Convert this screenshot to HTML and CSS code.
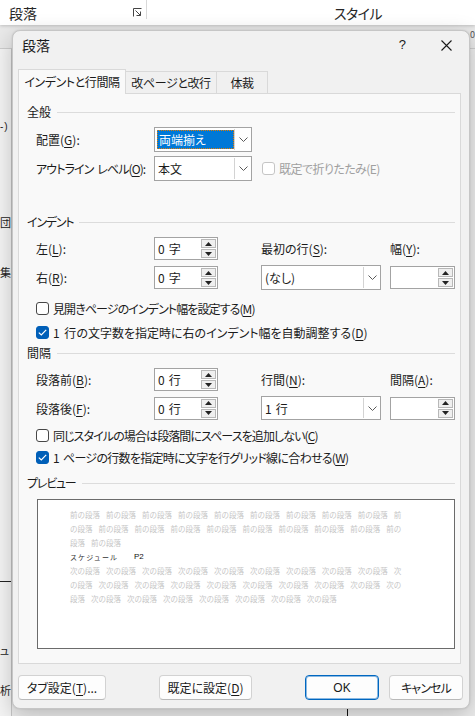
FILE: index.html
```html
<!DOCTYPE html>
<html lang="ja">
<head>
<meta charset="utf-8">
<title>段落</title>
<link rel="stylesheet" href="styles.css">
</head>
<body>
<div class="app">
  <div class="ribbon">
    <div class="rgroup">
      <span class="rlabel">段落</span>
      <svg class="launcher" width="9" height="9" viewBox="0 0 9 9"><path d="M0.5 8.5V0.5H8.5" fill="none" stroke="#444" stroke-width="1"/><path d="M2.5 2.5L7.5 7.5M7.5 3.5V7.5H3.5" fill="none" stroke="#444" stroke-width="1"/></svg>
    </div>
    <div class="rsep"></div>
    <div class="rgroup2">スタイル</div>
  </div>
  <div class="band"><span class="band-num">0</span></div>
  <div class="work">
    <div class="docstrip">
      <div class="d d1">-)</div>
      <div class="d d2">団</div>
      <div class="d d3">集</div>
      <div class="dline"></div>
      <div class="d d4">ュ</div>
      <div class="d d5">析</div>
    </div>
    <div class="docmain"><div class="vline"></div></div>
  </div>
</div>

<div class="dialog">
  <div class="titlebar">
    <span class="title">段落</span>
    <span class="help">?</span>
    <svg class="close" width="11" height="11" viewBox="0 0 11 11"><path d="M0.5 0.5L10.5 10.5M10.5 0.5L0.5 10.5" stroke="#1a1a1a" stroke-width="1.1" fill="none"/></svg>
  </div>
  <div class="tabs">
    <div class="tab active t1">インデントと行間隔</div>
    <div class="tab t2">改ページと改行</div>
    <div class="tab t3">体裁</div>
  </div>
  <div class="panel">
    <div class="sec">全般</div>
    <div class="grid-general">
      <div class="lbl">配置(<u>G</u>):</div>
      <div class="combo">
        <div class="cval"><span class="sel">両端揃え</span></div>
        <div class="cbtn"><svg width="9" height="5" viewBox="0 0 9 5"><path d="M0.5 0.5L4.5 4.5L8.5 0.5" fill="none" stroke="#5a5a5a"/></svg></div>
      </div>
      <div></div>
      <div class="lbl tight-9 spaced">アウトライン レベル(<u>O</u>):</div>
      <div class="combo">
        <div class="cval">本文</div>
        <div class="cbtn"><svg width="9" height="5" viewBox="0 0 9 5"><path d="M0.5 0.5L4.5 4.5L8.5 0.5" fill="none" stroke="#5a5a5a"/></svg></div>
      </div>
      <div class="check disabled inline"><span class="box"></span><span class="tight-6">既定で折りたたみ(E)</span></div>
    </div>

    <div class="sec sec-indent"><span class="tight-12">インデント</span></div>
    <div class="grid-six g1">
      <div class="lbl">左(<u>L</u>):</div>
      <div class="spin"><span class="sval">0 字</span><div class="sbtns"><div class="sb"><svg width="7" height="4" viewBox="0 0 7 4"><polygon points="0,4 3.5,0 7,4" fill="#222"/></svg></div><div class="sb"><svg width="7" height="4" viewBox="0 0 7 4"><polygon points="0,0 7,0 3.5,4" fill="#222"/></svg></div></div></div>
      <div></div>
      <div class="lbl">最初の行(<u>S</u>):</div>
      <div></div>
      <div class="lbl">幅(<u>Y</u>):</div>

      <div class="lbl">右(<u>R</u>):</div>
      <div class="spin"><span class="sval">0 字</span><div class="sbtns"><div class="sb"><svg width="7" height="4" viewBox="0 0 7 4"><polygon points="0,4 3.5,0 7,4" fill="#222"/></svg></div><div class="sb"><svg width="7" height="4" viewBox="0 0 7 4"><polygon points="0,0 7,0 3.5,4" fill="#222"/></svg></div></div></div>
      <div></div>
      <div class="combo">
        <div class="cval">(なし)</div>
        <div class="cbtn"><svg width="9" height="5" viewBox="0 0 9 5"><path d="M0.5 0.5L4.5 4.5L8.5 0.5" fill="none" stroke="#5a5a5a"/></svg></div>
      </div>
      <div></div>
      <div class="spin"><span class="sval"></span><div class="sbtns"><div class="sb"><svg width="7" height="4" viewBox="0 0 7 4"><polygon points="0,4 3.5,0 7,4" fill="#222"/></svg></div><div class="sb"><svg width="7" height="4" viewBox="0 0 7 4"><polygon points="0,0 7,0 3.5,4" fill="#222"/></svg></div></div></div>
    </div>
    <div class="checks c1">
      <div class="check"><span class="box"></span><span class="tight-9">見開きページのインデント幅を設定する(<u>M</u>)</span></div>
      <div class="check"><span class="box on"><svg width="9" height="7" viewBox="0 0 9 7"><path d="M0.8 3.6L3.3 6L8.2 0.9" fill="none" stroke="#fff" stroke-width="1.2"/></svg></span><span class="spaced">1 行の文字数を指定時に右のインデント幅を自動調整する(<u>D</u>)</span></div>
    </div>

    <div class="sec sec-space">間隔</div>
    <div class="grid-six g2">
      <div class="lbl">段落前(<u>B</u>):</div>
      <div class="spin"><span class="sval">0 行</span><div class="sbtns"><div class="sb"><svg width="7" height="4" viewBox="0 0 7 4"><polygon points="0,4 3.5,0 7,4" fill="#222"/></svg></div><div class="sb"><svg width="7" height="4" viewBox="0 0 7 4"><polygon points="0,0 7,0 3.5,4" fill="#222"/></svg></div></div></div>
      <div></div>
      <div class="lbl">行間(<u>N</u>):</div>
      <div></div>
      <div class="lbl">間隔(<u>A</u>):</div>

      <div class="lbl">段落後(<u>F</u>):</div>
      <div class="spin"><span class="sval">0 行</span><div class="sbtns"><div class="sb"><svg width="7" height="4" viewBox="0 0 7 4"><polygon points="0,4 3.5,0 7,4" fill="#222"/></svg></div><div class="sb"><svg width="7" height="4" viewBox="0 0 7 4"><polygon points="0,0 7,0 3.5,4" fill="#222"/></svg></div></div></div>
      <div></div>
      <div class="combo">
        <div class="cval">1 行</div>
        <div class="cbtn"><svg width="9" height="5" viewBox="0 0 9 5"><path d="M0.5 0.5L4.5 4.5L8.5 0.5" fill="none" stroke="#5a5a5a"/></svg></div>
      </div>
      <div></div>
      <div class="spin"><span class="sval"></span><div class="sbtns"><div class="sb"><svg width="7" height="4" viewBox="0 0 7 4"><polygon points="0,4 3.5,0 7,4" fill="#222"/></svg></div><div class="sb"><svg width="7" height="4" viewBox="0 0 7 4"><polygon points="0,0 7,0 3.5,4" fill="#222"/></svg></div></div></div>
    </div>
    <div class="checks c2">
      <div class="check"><span class="box"></span><span class="tight-9">同じスタイルの場合は段落間にスペースを追加しない(<u>C</u>)</span></div>
      <div class="check"><span class="box on"><svg width="9" height="7" viewBox="0 0 9 7"><path d="M0.8 3.6L3.3 6L8.2 0.9" fill="none" stroke="#fff" stroke-width="1.2"/></svg></span><span class="tight-7 spaced">1 ページの行数を指定時に文字を行グリッド線に合わせる(<u>W</u>)</span></div>
    </div>

    <div class="sec sec-preview"><span class="tight-12">プレビュー</span></div>
    <div class="preview">
      <div class="pv">前の段落 前の段落 前の段落 前の段落 前の段落 前の段落 前の段落 前の段落 前の段落 前</div>
      <div class="pv">の段落 前の段落 前の段落 前の段落 前の段落 前の段落 前の段落 前の段落 前の段落 前の</div>
      <div class="pv">段落 前の段落</div>
      <div class="pv cur"><span class="sched">スケジュール</span><span class="p2">P2</span></div>
      <div class="pv">次の段落 次の段落 次の段落 次の段落 次の段落 次の段落 次の段落 次の段落 次の段落 次</div>
      <div class="pv">の段落 次の段落 次の段落 次の段落 次の段落 次の段落 次の段落 次の段落 次の段落 次の</div>
      <div class="pv">段落 次の段落 次の段落 次の段落 次の段落 次の段落 次の段落 次の段落</div>
    </div>
  </div>
  <div class="footer">
    <div class="btn b-tab"><span>タブ設定(<u>T</u>)...</span></div>
    <div class="btn b-def"><span>既定に設定(<u>D</u>)</span></div>
    <div class="btn b-ok">OK</div>
    <div class="btn b-cancel"><span class="tight-9">キャンセル</span></div>
  </div>
</div>
</body>
</html>
```

FILE: styles.css
```css
* { box-sizing: border-box; }
html, body { margin: 0; padding: 0; }
body {
  width: 475px;
  height: 716px;
  overflow: hidden;
  position: relative;
  background: #ececec;
  font-family: "Noto Sans CJK JP", "Noto Sans", sans-serif;
  font-size: 12px;
  color: #1b1b1b;
  font-feature-settings: "palt";
}
u { text-decoration-thickness: 1px; text-underline-offset: 2px; }

.tight-6 { letter-spacing: -0.55px; }
.tight-7 { letter-spacing: -0.7px; }
.tight-9 { letter-spacing: -0.9px; }
.tight-12 { letter-spacing: -1.2px; }
.spaced { word-spacing: 2px; }

/* background application */
.app { width: 475px; height: 716px; display: flex; flex-direction: column; }
.ribbon {
  height: 25px; flex: none; background: #fff; display: flex; align-items: flex-start;
  box-shadow: 0 1px 3px rgba(0,0,0,0.18); position: relative; z-index: 1;
}
.rgroup { width: 146px; height: 25px; display: flex; align-items: center; padding: 0 4px 0 9px; }
.rlabel { font-size: 14px; flex: 1; color: #262626; }
.launcher { display: block; margin-top: -1px; }
.rsep { width: 1px; height: 19px; background: #d9d9d9; }
.rgroup2 { flex: 1; height: 25px; display: flex; align-items: center; padding-left: 187px; font-size: 14px; color: #262626; letter-spacing: -0.6px; }
.band {
  height: 24px; flex: none; background: #e9e9e9; border-bottom: 1px solid #cdcdcd;
  display: flex; justify-content: flex-end; align-items: flex-start;
}
.band-num { font-size: 9px; color: #555; padding-top: 3px; margin-right: 0; }
.work { flex: 1; display: flex; }
.docstrip {
  width: 12px; flex: none; background: #f4f4f4; border-right: 1px solid #c7c7c7;
  display: flex; flex-direction: column; overflow: hidden; font-size: 11px; color: #222;
}
.d { line-height: 16px; white-space: nowrap; }
.d1 { margin-top: 70px; font-family: "Liberation Sans", sans-serif; font-size: 10px; letter-spacing: 1px; }
.d2 { margin-top: 79px; }
.d3 { margin-top: 34px; }
.dline { margin-top: 301px; height: 1px; background: #222; flex: none; }
.d4 { margin-top: 60px; }
.d5 { margin-top: 22px; line-height: 20px; }
.docmain { flex: 1; display: flex; flex-direction: column; justify-content: flex-end; padding-left: 335px; }
.vline { width: 1px; height: 10px; background: #111; }

/* dialog */
.dialog {
  position: absolute; left: 12px; top: 30px; width: 458px; height: 679px;
  background: #f1f1f1; border: 1px solid #c6c6c6; border-radius: 8px;
  box-shadow: 0 6px 22px rgba(0,0,0,0.22), 0 0 2px rgba(0,0,0,0.12);
  display: flex; flex-direction: column; z-index: 2;
}
.titlebar { height: 38px; flex: none; display: flex; align-items: flex-start; padding: 4px 17px 0 9px; }
.title { flex: 1; font-size: 14px; line-height: 20px; color: #1a1a1a; }
.help { font-size: 13px; line-height: 20px; margin-right: 35px; margin-top: 0; font-family: "Liberation Sans", sans-serif; }
.close { margin-top: 5px; }

.tabs { height: 24px; flex: none; display: flex; align-items: flex-end; padding-left: 5px; }
.tab {
  height: 22px; border: 1px solid #d9d9d9; border-bottom: none; background: #f0f0f0;
  text-align: center; line-height: 21px; margin-left: -1px; white-space: nowrap; color: #1a1a1a;
  letter-spacing: -0.4px;
}
.tab.active { height: 25px; background: #f9f9f9; position: relative; z-index: 1; margin-bottom: -1px; line-height: 24px; margin-left: 0; }
.t1 { width: 108px; }
.t2 { width: 92px; }
.t3 { width: 52px; }

.panel {
  height: 571px; flex: none; margin: 0 8px 0 5px; border: 1px solid #d9d9d9; background: #f9f9f9;
  padding: 10px 5px 0 8px; display: flex; flex-direction: column;
}
.sec { display: flex; align-items: center; height: 16px; line-height: 16px; white-space: nowrap; }
.sec::after { content: ""; flex: 1; height: 1px; background: #dcdcdc; margin-left: 6px; }
.sec-indent { margin-top: 33px; }
.sec-space { margin-top: 3px; }
.sec-preview { margin-top: 8px; }

.lbl { white-space: pre; }

.grid-general {
  display: grid; grid-template-columns: 118px 98px auto; grid-auto-rows: 25px; row-gap: 4px;
  align-items: center; margin-top: 7px; padding-left: 9px;
}
.grid-six {
  display: grid; grid-template-columns: 118px 64px 43px 120px 9px 65px;
  align-items: center; margin-top: 7px; padding-left: 9px; row-gap: 5px;
}
.g1 { grid-template-rows: 23px 25px; }
.g2 { grid-template-rows: 23px 24px; }

.combo { display: flex; height: 25px; border: 1px solid #a3a3a3; background: #fff; }
.g2 .combo { height: 24px; }
.cval { flex: 1; padding-left: 3px; display: flex; align-items: center; white-space: pre; word-spacing: 1.5px; }
.cbtn { width: 17px; border-left: 1px solid #d3d3d3; display: flex; align-items: center; justify-content: center; margin: 1px 0; }
.sel {
  flex: 1; align-self: stretch; margin: 2px 0 2px -1px; background: #0078d7; color: #fff;
  outline: 1px dotted #e57c00; outline-offset: -1px; padding-left: 2px; display: flex; align-items: center;
}

.spin { display: flex; height: 23px; border: 1px solid #a3a3a3; background: #fff; }
.sval { flex: 1; padding-left: 3px; line-height: 21px; white-space: pre; word-spacing: 1.5px; }
.sbtns { width: 16px; display: flex; flex-direction: column; gap: 1px; padding: 1px 1px 1px 0; }
.sb { flex: 1; background: #efefef; border: 1px solid #b8b8b8; display: flex; align-items: center; justify-content: center; }
.sb svg { display: block; }

.checks { display: flex; flex-direction: column; padding-left: 9px; }
.c1 { margin-top: 8px; gap: 4px; }
.c2 { margin-top: 5px; gap: 2px; }
.check { display: flex; align-items: center; height: 20px; gap: 4px; white-space: pre; }
.check.inline { margin-left: 10px; height: 25px; }
.box {
  width: 13px; height: 13px; border: 1px solid #474747; border-radius: 3px; background: #fff;
  flex: none; display: flex; align-items: center; justify-content: center;
}
.box.on { background: #005fb8; border-color: #005fb8; }
.check.disabled { color: #a0a0a0; }
.check.disabled .box { border-color: #c5c5c5; }

.preview {
  margin: 8px 0 0 10px; height: 150px; border: 1px solid #6b6b6b; background: #fff;
  padding: 8px 0 0 32px;
}
.pv {
  font-size: 7.5px; line-height: 14px; height: 14px; color: #c6c6c6; white-space: pre;
  word-spacing: 4.3px; font-feature-settings: normal;
}
.pv.cur { color: #333; display: flex; align-items: center; }
.sched { font-size: 7px; letter-spacing: 1.1px; width: 64px; }
.p2 { font-family: "Liberation Sans", sans-serif; font-size: 8px; color: #111; }

.footer { display: flex; padding: 11px 6px 0 5px; }
.btn {
  height: 25px; border: 1px solid #d2d2d2; border-bottom-color: #b9b9b9; border-radius: 4px;
  background: #fdfdfd; display: flex; align-items: center; justify-content: center; white-space: nowrap; color: #1a1a1a;
}
.b-tab { width: 88px; }
.b-def { width: 93px; margin-left: 53px; }
.b-ok { width: 74px; margin-left: auto; border: 1px solid #0067c0; box-shadow: inset 0 0 0 1px rgba(0,103,192,0.45); font-family: "Liberation Sans", "Noto Sans CJK JP", sans-serif; }
.b-cancel { width: 74px; margin-left: 10px; }
```
